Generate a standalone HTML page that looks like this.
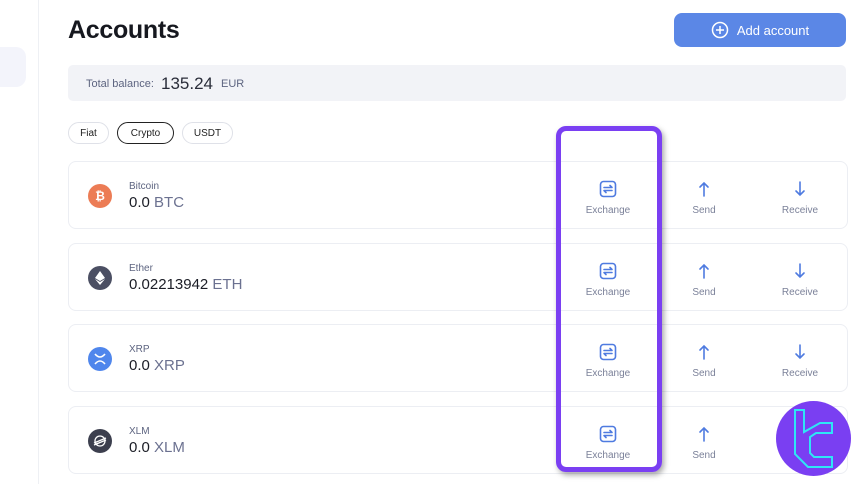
<!DOCTYPE html>
<html><head><style>
body{margin:0;width:860px;height:484px;overflow:hidden;background:#fff;font-family:"Liberation Sans",sans-serif;position:relative}
.a{position:absolute}
.card{position:absolute;left:68px;width:780px;height:68px;border:1px solid #eceef3;border-radius:8px;box-sizing:border-box}
.ic{position:absolute;left:19px;top:22px;width:24px;height:24px;border-radius:50%;display:flex;align-items:center;justify-content:center;color:#fff;font-size:12px;font-weight:bold}
.nm{position:absolute;left:60px;top:19px;font-size:10px;color:#5d6480}
.am{position:absolute;left:60px;top:32px;font-size:15px;color:#1b1d26}
.am span{color:#6b7190}
.act{position:absolute;top:18px;width:80px;margin-left:-40px;text-align:center;font-size:10px;color:#7b8199}
.act svg{display:block;margin:0 auto 7px}
.chip{position:absolute;top:122px;height:22px;border:1px solid #dfe1e8;border-radius:11px;box-sizing:border-box;font-size:10px;color:#222;display:flex;align-items:center;justify-content:center}
</style></head><body>
<div class="a" style="left:38px;top:0;width:1px;height:484px;background:#eef0f4"></div>
<div class="a" style="left:-10px;top:47px;width:36px;height:40px;background:#f3f4fb;border-radius:10px"></div>
<div class="a" style="left:68px;top:16px;font-size:25px;font-weight:bold;color:#16181f;letter-spacing:-0.3px">Accounts</div>
<div class="a" style="left:674px;top:13px;width:172px;height:34px;background:#5b87e6;border-radius:8px;color:#fff;font-size:13px;display:flex;align-items:center;justify-content:center;gap:8px">
<svg width="18" height="18" viewBox="0 0 18 18"><circle cx="9" cy="9" r="7.5" fill="none" stroke="#fff" stroke-width="1.5"/><path d="M9 5v8M5 9h8" stroke="#fff" stroke-width="1.5"/></svg>Add account</div>
<div class="a" style="left:68px;top:65px;width:778px;height:36px;background:#f2f3f7;border-radius:5px"></div>
<div class="a" style="left:86px;top:78px;font-size:11px;color:#5d6480">Total balance:</div>
<div class="a" style="left:161px;top:74px;font-size:17px;color:#2a2d3a">135.24</div>
<div class="a" style="left:221px;top:78px;font-size:11px;color:#5d6480">EUR</div>
<div class="chip" style="left:68px;width:41px">Fiat</div>
<div class="chip" style="left:117px;width:57px;border:1.5px solid #222">Crypto</div>
<div class="chip" style="left:182px;width:51px">USDT</div>

<div class="card" style="top:161px"><div class="ic" style="background:#ec7c55">₿</div><div class="nm">Bitcoin</div><div class="am">0.0 <span>BTC</span></div></div>
<div class="card" style="top:243px"><div class="ic" style="background:#4b4f63"><svg width="10" height="14" viewBox="0 0 10 14"><path d="M5 0L0 7l5 3 5-3z M0 8l5 6 5-6-5 3z" fill="#fff"/></svg></div><div class="nm">Ether</div><div class="am">0.02213942 <span>ETH</span></div></div>
<div class="card" style="top:324px"><div class="ic" style="background:#4f86ec"><svg width="12" height="12" viewBox="0 0 12 12"><path d="M1 1q5 6 10 0M1 11q5-6 10 0" stroke="#fff" stroke-width="1.6" fill="none"/></svg></div><div class="nm">XRP</div><div class="am">0.0 <span>XRP</span></div></div>
<div class="card" style="top:406px"><div class="ic" style="background:#3c3f4e"><svg width="14" height="14" viewBox="0 0 14 14"><circle cx="7" cy="7" r="5" fill="none" stroke="#fff" stroke-width="1.3"/><path d="M1 9l12-5M1 11l12-5" stroke="#fff" stroke-width="1.3"/></svg></div><div class="nm">XLM</div><div class="am">0.0 <span>XLM</span></div></div>

<div id="acts"></div>
<script>
var tops=[161,243,324,406],h='';
var ex='<svg width="18" height="18" viewBox="0 0 18 18"><rect x="1.5" y="1.5" width="15" height="15" rx="3" fill="none" stroke="#4f7be0" stroke-width="1.6"/><path d="M5 7.5h8l-2-2M13 10.5H5l2 2" fill="none" stroke="#4f7be0" stroke-width="1.6" stroke-linecap="round" stroke-linejoin="round"/></svg>';
var up='<svg width="18" height="18" viewBox="0 0 18 18"><path d="M9 16V3M5 7l4-4 4 4" fill="none" stroke="#4f7be0" stroke-width="1.6" stroke-linecap="round"/></svg>';
var dn='<svg width="18" height="18" viewBox="0 0 18 18"><path d="M9 2v13M5 11l4 4 4-4" fill="none" stroke="#4f7be0" stroke-width="1.6" stroke-linecap="round"/></svg>';
tops.forEach(function(t,i){
h+='<div class="act" style="left:608px;top:'+(t+19)+'px">'+ex+'Exchange</div>';
h+='<div class="act" style="left:704px;top:'+(t+19)+'px">'+up+'Send</div>';
if(i<3)h+='<div class="act" style="left:800px;top:'+(t+19)+'px">'+dn+'Receive</div>';
});
document.getElementById('acts').innerHTML=h;
</script>
<div class="a" style="left:556px;top:126px;width:106px;height:346px;box-sizing:border-box;border:5px solid #7a3ff2;border-radius:10px;box-shadow:2px 3px 6px rgba(0,0,0,.35)"></div>
<div class="a" style="left:776px;top:401px;width:75px;height:75px;border-radius:50%;background:#7a3ff2"></div>
<svg class="a" style="left:776px;top:401px" width="75" height="75" viewBox="0 0 75 75"><path d="M19 9h9v22l16-9h12v10H40l-6 4v16l4 4h18v10H32l-13-13z" fill="none" stroke="#2ee6f5" stroke-width="2"/></svg>
</body></html>
